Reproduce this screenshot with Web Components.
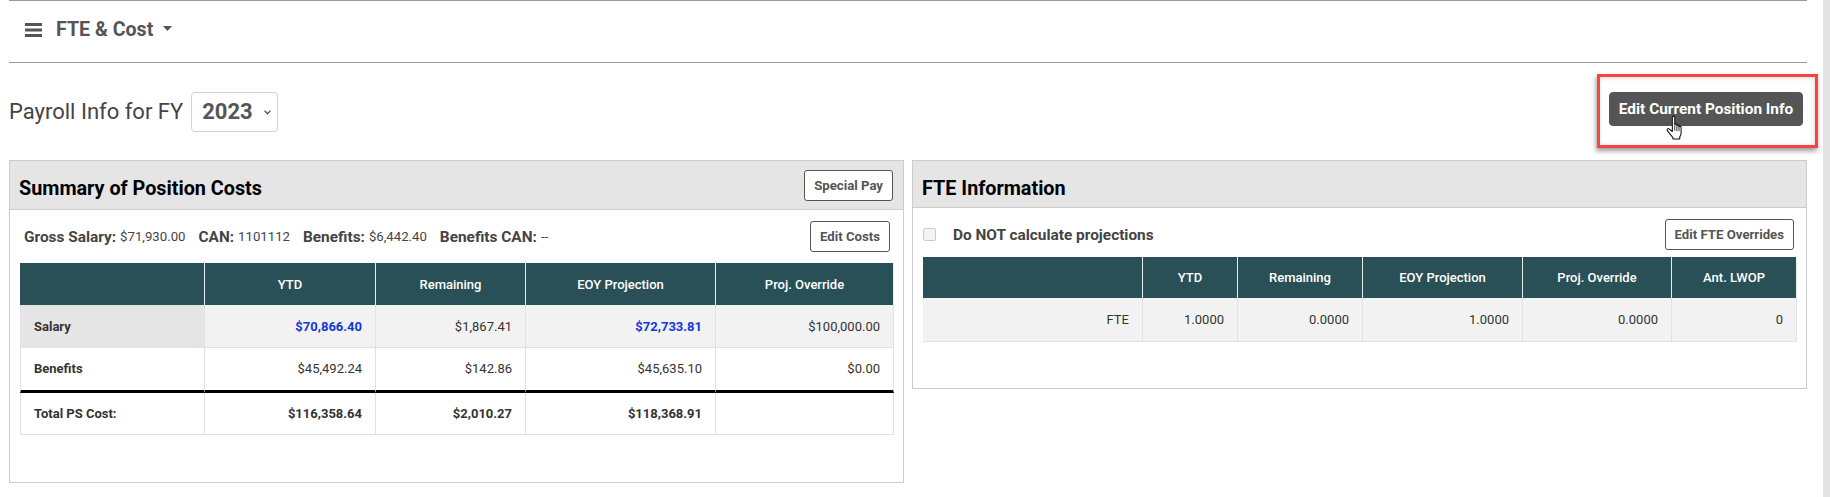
<!DOCTYPE html>
<html lang="en"><head><meta charset="utf-8"><title>FTE &amp; Cost</title>
<style>
html,body{margin:0;padding:0;height:497px;overflow:hidden;background:#fff;font-family:Roboto,"Liberation Sans",sans-serif;color:#333}
</style></head>
<body>
<app-page>
  <section-bar>FTE &amp; Cost</section-bar>
  <payroll-head year="2023">
    <span>Payroll Info for FY</span>
    <ui-button slot="action" kind="dark">Edit Current Position Info</ui-button>
  </payroll-head>
  <panel-row>
    <ui-panel style="--pad:11px 9px 47px 10px;--head:49px;--tpad:7px">
      <span slot="title">Summary of Position Costs</span>
      <ui-button slot="tool">Special Pay</ui-button>
      <info-row>
        <span><info-pair label="Gross Salary:">$71,930.00</info-pair><info-pair label="CAN:">1101112</info-pair><info-pair label="Benefits:">$6,442.40</info-pair><info-pair label="Benefits CAN:">--</info-pair></span>
        <ui-button slot="end" style="margin-right:4px">Edit Costs</ui-button>
      </info-row>
      <data-table style="--cols:185px 171px 150px 190px 178px;--rows:42px 43px 45px 42px;margin-top:11px">
        <t-cell kind="head"></t-cell><t-cell kind="head">YTD</t-cell><t-cell kind="head">Remaining</t-cell><t-cell kind="head">EOY Projection</t-cell><t-cell kind="head">Proj. Override</t-cell>
        <t-cell kind="rowhead" shade>Salary</t-cell><t-cell kind="blue" alt>$70,866.40</t-cell><t-cell alt>$1,867.41</t-cell><t-cell kind="blue" alt>$72,733.81</t-cell><t-cell alt>$100,000.00</t-cell>
        <t-cell kind="rowhead" heavy>Benefits</t-cell><t-cell heavy>$45,492.24</t-cell><t-cell heavy>$142.86</t-cell><t-cell heavy>$45,635.10</t-cell><t-cell heavy>$0.00</t-cell>
        <t-cell kind="rowhead">Total PS Cost:</t-cell><t-cell kind="bold">$116,358.64</t-cell><t-cell kind="bold">$2,010.27</t-cell><t-cell kind="bold">$118,368.91</t-cell><t-cell kind="bold"></t-cell>
      </data-table>
    </ui-panel>
    <ui-panel style="--pad:11px 9px 46px 10px;--head:47px;--tpad:9px">
      <span slot="title">FTE Information</span>
      <info-row>
        <check-label>Do NOT calculate projections</check-label>
        <ui-button slot="end" style="margin-right:3px">Edit FTE Overrides</ui-button>
      </info-row>
      <data-table style="--cols:220px 95px 125px 160px 149px 125px;--rows:41px 44px;margin-top:7px">
        <t-cell kind="head"></t-cell><t-cell kind="head">YTD</t-cell><t-cell kind="head">Remaining</t-cell><t-cell kind="head">EOY Projection</t-cell><t-cell kind="head">Proj. Override</t-cell><t-cell kind="head">Ant. LWOP</t-cell>
        <t-cell alt>FTE</t-cell><t-cell alt>1.0000</t-cell><t-cell alt>0.0000</t-cell><t-cell alt>1.0000</t-cell><t-cell alt>0.0000</t-cell><t-cell alt>0</t-cell>
      </data-table>
    </ui-panel>
  </panel-row>
  <call-out></call-out>
</app-page>
<script>
function def(name, css, html){
  customElements.define(name, class extends HTMLElement{
    constructor(){super();const r=this.attachShadow({mode:'open'});
      r.innerHTML='<style>'+css+'</style>'+(typeof html==='function'?html(this):html);}
  });
}
def('app-page',
 `:host{display:flex;height:497px;position:relative;box-sizing:border-box}
  main{flex:1;min-width:0;padding:0 16px 0 9px;box-sizing:border-box}
  .sb{width:7px;flex:none;background:#e3e3e3}`,
 `<main><slot></slot></main><div class="sb"></div>`);
def('section-bar',
 `:host{display:flex;align-items:center;height:61px;box-sizing:content-box;border-top:1px solid #999;border-bottom:1px solid #999;padding-left:16px;color:#555;font-size:19.600px;font-weight:700}
  svg{display:block;flex:none}
  .t{margin-left:14px;position:relative;top:-2px}
  .c{margin-left:10px;position:relative;top:-3px}
  .h{position:relative;top:-2px}`,
 `<svg class="h" width="17" height="14" viewBox="0 0 17 14"><path fill="#555" d="M0 0h17v3H0zM0 5.500h17v3H0zM0 11h17v3H0z"/></svg><span class="t"><slot></slot></span><svg class="c" width="9" height="5" viewBox="0 0 9 5"><path fill="#555" d="M0 0h9L4.500 5z"/></svg>`);
def('payroll-head',
 `:host{display:flex;justify-content:space-between;align-items:flex-start;margin-top:29px;height:40px}
  .l{display:flex;align-items:center;gap:8px;font-size:22px;color:#444;height:40px}
  .sel{display:flex;align-items:center;box-sizing:border-box;height:40px;width:87px;border:1px solid #ced4da;border-radius:4px;padding:0 0 1px 10px;color:#555;font-size:22px;font-weight:700;background:#fff}
  .sel svg{margin-left:11px;margin-top:1px}
  ::slotted(span){padding-bottom:2px}
  ::slotted([slot=action]){margin-right:4px}`,
 el=>`<div class="l"><slot></slot><div class="sel"><span>${el.getAttribute('year')}</span><svg width="7" height="5" viewBox="0 0 7 5"><path fill="none" stroke="#555" stroke-width="1.300" d="M.6 .8 3.500 3.800 6.400 .8"/></svg></div></div><slot name="action"></slot>`);
def('ui-button',
 `:host{display:inline-flex;align-items:center;justify-content:center;box-sizing:border-box;height:31px;padding:0 9px;border:1px solid #555;border-radius:3px;background:#fff;color:#555;font-size:13.200px;font-weight:700;white-space:nowrap}
  :host([kind=dark]){height:34px;width:194px;background:#555;color:#fff;font-size:15.400px;padding:0;border-color:#555;border-radius:4px}`,
 `<slot></slot>`);
def('panel-row',`:host{display:flex;gap:8px;align-items:flex-start;margin-top:28px}`,`<slot></slot>`);
def('ui-panel',
 `:host{display:block;width:895px;box-sizing:border-box;border:1px solid #ccc;background:#fff}
  header{display:flex;align-items:center;justify-content:space-between;box-sizing:border-box;height:var(--head);background:#e5e5e5;border-bottom:1px solid #ccc;padding:0 10px 0 9px;color:#000;font-size:19.800px;font-weight:700}
  header span{padding-top:var(--tpad)}
  .b{padding:var(--pad)}`,
 `<header><span><slot name="title"></slot></span><slot name="tool"></slot></header><div class="b"><slot></slot></div>`);
def('info-row',
 `:host{display:flex;justify-content:space-between;align-items:center;height:31px}`,
 `<slot></slot><slot name="end"></slot>`);
def('info-pair',
 `:host{display:inline-block;margin-right:13px;font-size:13.200px;color:#444}
  :host(:first-child){margin-left:4px}
  b{font-size:15.400px;font-weight:700;color:#444;margin-right:4px}
  span{position:relative;top:-1px}`,
 el=>`<b>${el.getAttribute('label')}</b><span><slot></slot></span>`);
def('check-label',
 `:host{display:flex;align-items:center;font-size:15.400px;font-weight:700;color:#444}
  i{display:block;box-sizing:border-box;width:13px;height:13px;border:1px solid #ccc;border-radius:2px;background:#f4f4f4;margin-right:17px}`,
 `<i></i><slot></slot>`);
def('data-table',
 `:host{display:grid;grid-template-columns:var(--cols);grid-template-rows:var(--rows)}`,
 `<slot></slot>`);
def('t-cell',
 `:host{display:flex;align-items:center;justify-content:flex-end;box-sizing:border-box;padding:0 13px;font-size:13px;color:#333;background:#fff;border-right:1px solid #dee2e6;border-bottom:1px solid #dee2e6;min-width:0;overflow:hidden}
  :host(:first-child),:host([kind=rowhead]){border-left:1px solid #dee2e6}
  :host([alt]){background:#f2f2f2}
  :host([shade]){background:#e5e5e5;border-bottom-color:#e5e5e5}
  :host([heavy]){border-bottom:3px solid #000;padding-bottom:1px}
  :host([kind=head]){background:#285056;color:#fff;font-weight:500;justify-content:center;border:0;border-right:1px solid #e8eeee}
  :host([kind=head]:last-of-type){border-right:0}
  :host([kind=rowhead]){justify-content:flex-start;font-weight:700;color:#333}
  :host([kind=bold]){font-weight:700;color:#333}
  :host([kind=blue]){font-weight:700;color:#1138d8}`,
 `<slot></slot>`);
def('call-out',
 `:host{position:absolute;left:1597px;top:74px;width:221px;height:74px;box-sizing:border-box;border:3px solid #f94343;box-shadow:-1px 3px 5px rgba(0,0,0,.4),inset -1px 1px 4px rgba(0,0,0,.15);pointer-events:none}
  svg{position:absolute;left:66px;top:38px}`,
 `<svg width="19" height="26" viewBox="0 0 18 24"><path fill="#fff" stroke="#111" stroke-width="1" stroke-linejoin="round" d="M6 1.800c0-1.400 2.300-1.400 2.300 0V9c0-.9 2-.9 2 0v.8c0-.9 2-.9 2 .1v.8c0-.9 2-.7 2 .3v5.500c0 2-.6 3-1.300 4.200v1.800H6.600v-1.400C5 19 3.200 17.300 1.300 14.500c-.9-1.500.7-2.600 1.900-1.500L6 15.300z"/><path fill="none" stroke="#111" stroke-width=".8" d="M8.300 9.500v5M10.300 10v5M12.300 10.500v4.500"/></svg>`);
</script>
</body></html>
